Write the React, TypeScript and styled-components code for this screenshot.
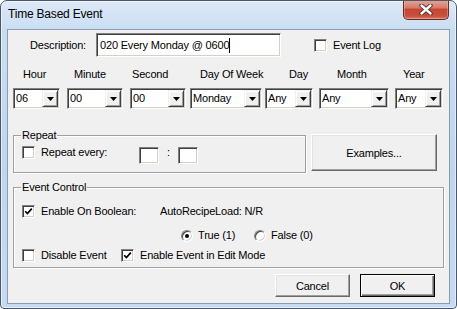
import React from 'react';
import styled, { createGlobalStyle } from 'styled-components';

const GlobalStyle = createGlobalStyle`
  html, body {
    margin: 0;
    padding: 0;
    background: #ffffff;
  }
  body {
    font-family: "Liberation Sans", Arial, sans-serif;
    font-size: 11px;
    letter-spacing: -0.18px;
    color: #000;
  }
`;

const Window = styled.div`
  box-sizing: border-box;
  width: 457px;
  height: 309px;
  display: flex;
  flex-direction: column;
  border: 1px solid #4a5867;
  border-radius: 7px 7px 4px 4px;
  background: linear-gradient(180deg, #dce9f7 0%, #c9ddf2 10%, #bfd6ee 55%, #c6dbf1 100%);
  box-shadow: inset 0 0 0 1px rgba(255, 255, 255, 0.55);
  padding: 0 6px 4px 6px;
  overflow: hidden;
`;

const TitleBar = styled.div`
  height: 28px;
  display: flex;
  align-items: flex-start;
  justify-content: space-between;
`;

const Title = styled.div`
  margin: 6px 0 0 1px;
  font-family: "Liberation Sans", Arial, sans-serif;
  font-size: 12px;
  line-height: 14px;
  letter-spacing: -0.2px;
  color: #000;
`;

const CloseButton = styled.div`
  box-sizing: border-box;
  width: 46px;
  height: 20px;
  margin: -1px 1px 0 0;
  display: flex;
  align-items: center;
  justify-content: center;
  border: 1px solid #6b2b22;
  border-top: none;
  border-radius: 0 0 5px 5px;
  background: linear-gradient(180deg, #e6a89c 0%, #d77a69 40%, #c54733 50%, #c8503b 85%, #d9806c 100%);
  box-shadow: inset 0 0 0 1px rgba(255, 210, 200, 0.35);
`;

const Client = styled.div`
  flex: 1;
  display: flex;
  flex-direction: column;
  border: 1px solid #8a9cb2;
  background: #f0f0f0;
`;

const Row = styled.div<{ $mt?: number; $ml?: number }>`
  display: flex;
  align-items: center;
  margin-top: ${p => p.$mt ?? 0}px;
  margin-left: ${p => p.$ml ?? 0}px;
`;

const TopRow = styled(Row)`
  align-items: flex-start;
`;

const Label = styled.span<{ $w?: number; $align?: string }>`
  display: inline-block;
  ${p => (p.$w ? `width: ${p.$w}px;` : '')}
  text-align: ${p => p.$align ?? 'left'};
  line-height: 13px;
  white-space: nowrap;
`;

const sunken = `
  box-sizing: border-box;
  background: #fff;
  border: 1px solid;
  border-color: #808080 #ffffff #ffffff #808080;
  box-shadow: inset 1px 1px 0 #404040, inset -1px -1px 0 #d4d0c8;
`;

const TextBox = styled.div<{ $w: number; $h: number; $ml?: number; $mt?: number }>`
  ${sunken}
  width: ${p => p.$w}px;
  height: ${p => p.$h}px;
  margin-left: ${p => p.$ml ?? 0}px;
  margin-top: ${p => p.$mt ?? 0}px;
  padding: 0 3px;
  display: flex;
  align-items: center;
  white-space: nowrap;
`;

const Caret = styled.span`
  display: inline-block;
  width: 1px;
  height: 15px;
  background: #000;
`;

const CheckItem = styled.label<{ $w?: number; $ml?: number }>`
  display: flex;
  align-items: center;
  gap: 6px;
  ${p => (p.$w ? `width: ${p.$w}px;` : '')}
  margin-left: ${p => p.$ml ?? 0}px;
  flex-shrink: 0;
`;

const Box = styled.span`
  ${sunken}
  width: 13px;
  height: 13px;
  display: flex;
  align-items: center;
  justify-content: center;
  flex-shrink: 0;
`;

const Radio = styled.span<{ $on?: boolean }>`
  box-sizing: border-box;
  width: 12px;
  height: 12px;
  border-radius: 50%;
  background: #fff;
  border: 1px solid;
  border-color: #808080 #ffffff #ffffff #808080;
  box-shadow: inset 1px 1px 0 #404040, inset -1px -1px 0 #d4d0c8;
  display: flex;
  align-items: center;
  justify-content: center;
  flex-shrink: 0;
  &::after {
    content: '';
    width: 4px;
    height: 4px;
    border-radius: 50%;
    background: ${p => (p.$on ? '#000' : 'transparent')};
  }
`;

const RadioItem = styled.label<{ $w?: number; $ml?: number }>`
  display: flex;
  align-items: center;
  gap: 5px;
  ${p => (p.$w ? `width: ${p.$w}px;` : '')}
  margin-left: ${p => p.$ml ?? 0}px;
`;

const Fields = styled.div`
  display: flex;
  margin-top: 11px;
`;

const Field = styled.div<{ $w: number; $ml: number }>`
  width: ${p => p.$w}px;
  margin-left: ${p => p.$ml}px;
  display: flex;
  flex-direction: column;
`;

const FieldLabel = styled.span<{ $indent: number }>`
  padding-left: ${p => p.$indent}px;
  line-height: 13px;
  height: 13px;
  white-space: nowrap;
  margin-bottom: 7px;
`;

const Combo = styled.div`
  ${sunken}
  height: 21px;
  padding: 1px;
  display: flex;
`;

const ComboText = styled.span`
  flex: 1;
  padding-left: 1px;
  line-height: 17px;
  white-space: nowrap;
  overflow: hidden;
`;

const ComboArrow = styled.span`
  box-sizing: border-box;
  width: 16px;
  height: 17px;
  background: #f0f0f0;
  border: 1px solid;
  border-color: #f0f0f0 #404040 #404040 #f0f0f0;
  box-shadow: inset 1px 1px 0 #fff, inset -1px -1px 0 #a0a0a0;
  display: flex;
  align-items: center;
  justify-content: center;
`;

const Group = styled.div<{ $w: number; $h: number }>`
  position: relative;
  box-sizing: border-box;
  width: ${p => p.$w}px;
  height: ${p => p.$h}px;
  border: 1px solid #a0a0a0;
  box-shadow: inset 1px 1px 0 #fff, 1px 1px 0 #fff;
  padding-left: 8px;
  display: flex;
  flex-direction: column;
  flex-shrink: 0;
`;

const GroupTitle = styled.span`
  position: absolute;
  left: 7px;
  top: -7px;
  padding: 0 1px;
  background: #f0f0f0;
  line-height: 13px;
`;

const Button = styled.div<{ $w: number; $h: number; $default?: boolean; $ml?: number; $mt?: number }>`
  box-sizing: border-box;
  width: ${p => p.$w}px;
  height: ${p => p.$h}px;
  margin-left: ${p => p.$ml ?? 0}px;
  margin-top: ${p => p.$mt ?? 0}px;
  display: flex;
  align-items: center;
  justify-content: center;
  background: #f0f0f0;
  border: 1px solid;
  border-color: ${p => (p.$default ? '#000' : '#fff #696969 #696969 #fff')};
  box-shadow: ${p =>
    p.$default
      ? 'inset 1px 1px 0 #fff, inset -1px -1px 0 #696969, inset -2px -2px 0 #a0a0a0'
      : 'inset -1px -1px 0 #a0a0a0, inset 1px 1px 0 #e3e3e3'};
  flex-shrink: 0;
`;

const Footer = styled.div`
  display: flex;
  justify-content: flex-end;
  padding-right: 14px;
  margin-top: 6px;
`;

const Tick = () => (
  <svg width="9" height="9" viewBox="0 0 9 9">
    <polyline points="1.2,4.2 3.4,6.6 7.8,1.6" fill="none" stroke="#000" strokeWidth="1.7" />
  </svg>
);

const CheckBox = ({ checked }: { checked?: boolean }) => <Box>{checked && <Tick />}</Box>;

const DownArrow = () => (
  <svg width="7" height="4" viewBox="0 0 7 4">
    <polygon points="0,0 7,0 3.5,4" fill="#000" />
  </svg>
);

const CloseGlyph = () => (
  <svg width="14" height="11" viewBox="0 0 14 11">
    <path d="M2.5 1.5 L11.5 9.5 M11.5 1.5 L2.5 9.5" stroke="#4a2a26" strokeWidth="4.2" strokeLinecap="round" />
    <path d="M2.5 1.5 L11.5 9.5 M11.5 1.5 L2.5 9.5" stroke="#ffffff" strokeWidth="2.4" strokeLinecap="round" />
  </svg>
);

const fields = [
  { label: 'Hour', value: '06', w: 47, ml: 5, indent: 10 },
  { label: 'Minute', value: '00', w: 56, ml: 7, indent: 7 },
  { label: 'Second', value: '00', w: 56, ml: 7, indent: 2 },
  { label: 'Day Of Week', value: 'Monday', w: 72, ml: 4, indent: 10 },
  { label: 'Day', value: 'Any', w: 48, ml: 3, indent: 24 },
  { label: 'Month', value: 'Any', w: 70, ml: 6, indent: 18 },
  { label: 'Year', value: 'Any', w: 48, ml: 6, indent: 8 },
];

export default function App() {
  return (
    <>
      <GlobalStyle />
      <Window>
        <TitleBar>
          <Title>Time Based Event</Title>
          <CloseButton>
            <CloseGlyph />
          </CloseButton>
        </TitleBar>
        <Client>
          <Row $mt={3}>
            <Label $w={78} $align="right">Description:</Label>
            <TextBox $w={185} $h={24} $ml={10}>
              020 Every Monday @ 0600
              <Caret />
            </TextBox>
            <CheckItem $ml={33}>
              <CheckBox />
              <Label>Event Log</Label>
            </CheckItem>
          </Row>

          <Fields>
            {fields.map(f => (
              <Field key={f.label} $w={f.w} $ml={f.ml}>
                <FieldLabel $indent={f.indent}>{f.label}</FieldLabel>
                <Combo>
                  <ComboText>{f.value}</ComboText>
                  <ComboArrow>
                    <DownArrow />
                  </ComboArrow>
                </Combo>
              </Field>
            ))}
          </Fields>

          <TopRow $mt={26} $ml={5}>
            <Group $w={293} $h={38}>
              <GroupTitle>Repeat</GroupTitle>
              <TopRow $mt={10}>
                <CheckItem $w={117}>
                  <CheckBox />
                  <Label>Repeat every:</Label>
                </CheckItem>
                <TextBox $w={20} $h={17} $mt={1} />
                <Label $w={19} $align="center">:</Label>
                <TextBox $w={20} $h={17} $mt={1} />
              </TopRow>
            </Group>
            <Button $w={126} $h={37} $ml={5} $mt={-1}>Examples...</Button>
          </TopRow>

          <Row $mt={14} $ml={5}>
            <Group $w={431} $h={81}>
              <GroupTitle>Event Control</GroupTitle>
              <TopRow $mt={17}>
                <CheckItem $w={138}>
                  <CheckBox checked />
                  <Label>Enable On Boolean:</Label>
                </CheckItem>
                <Label>AutoRecipeLoad: N/R</Label>
              </TopRow>
              <Row $mt={11} $ml={159}>
                <RadioItem $w={73}>
                  <Radio $on />
                  <Label>True (1)</Label>
                </RadioItem>
                <RadioItem>
                  <Radio />
                  <Label>False (0)</Label>
                </RadioItem>
              </Row>
              <Row $mt={7}>
                <CheckItem $w={99}>
                  <CheckBox />
                  <Label>Disable Event</Label>
                </CheckItem>
                <CheckItem>
                  <CheckBox checked />
                  <Label>Enable Event in Edit Mode</Label>
                </CheckItem>
              </Row>
            </Group>
          </Row>

          <Footer>
            <Button $w={75} $h={23}>Cancel</Button>
            <Button $w={75} $h={23} $ml={10} $default>OK</Button>
          </Footer>
        </Client>
      </Window>
    </>
  );
}
